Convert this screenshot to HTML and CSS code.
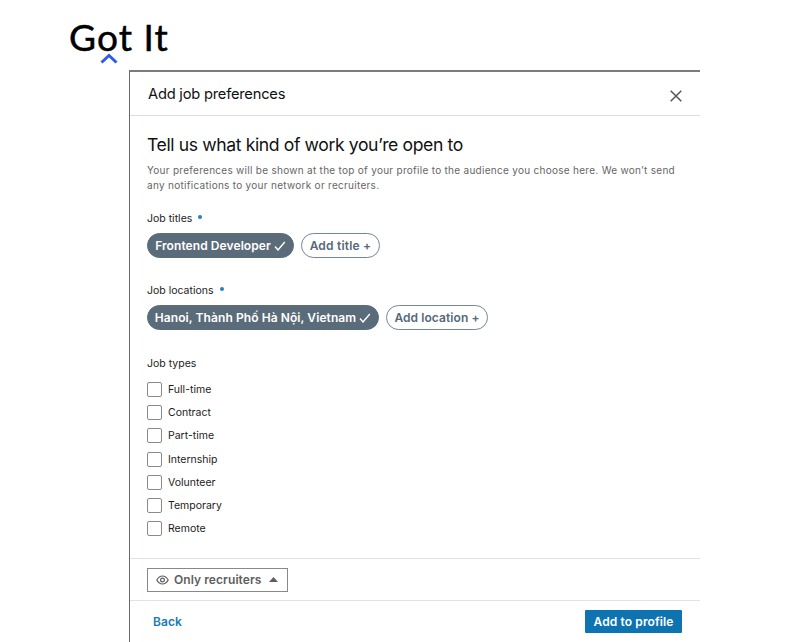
FILE: index.html
```html
<!DOCTYPE html>
<html lang="en">
<head>
    <meta charset="UTF-8">
    <meta name="viewport" content="width=device-width, initial-scale=1.0">
    <title>Add job preferences</title>
    <link rel="stylesheet" href="styles.css">
</head>
<body>
    <div class="logo">
        <span class="logo-text">Got It</span>
        <svg class="logo-mark" width="18" height="11" viewBox="0 0 18 11"><path d="M1.5 9.5 L9 2.5 L16.5 9.5" fill="none" stroke="#2f5bea" stroke-width="3"/></svg>
    </div>
    <div class="modal">
        <div class="modal-header">
            <h2>Add job preferences</h2>
            <svg class="close" width="12" height="12" viewBox="0 0 12 12"><path d="M0.7 0.7 L11.3 11.3 M11.3 0.7 L0.7 11.3" fill="none" stroke="#555" stroke-width="1.5"/></svg>
        </div>
        <div class="modal-body">
            <h1>Tell us what kind of work you’re open to</h1>
            <p class="intro">Your preferences will be shown at the top of your profile to the audience you choose here. We won’t send<br>any notifications to your network or recruiters.</p>

            <div class="label titles-label">Job titles <span class="required"></span></div>
            <div class="pills">
                <button class="pill selected pill-title"><span>Frontend Developer</span><svg width="12" height="10" viewBox="0 0 12 10"><path d="M1 5.5 L4 9 L10.8 1" fill="none" stroke="#fff" stroke-width="1.4"/></svg></button>
                <button class="pill add-title"><span>Add title +</span></button>
            </div>

            <div class="label locations-label">Job locations <span class="required"></span></div>
            <div class="pills">
                <button class="pill selected pill-location"><span>Hanoi, Thành Phố Hà Nội, Vietnam</span><svg width="12" height="10" viewBox="0 0 12 10"><path d="M1 5.5 L4 9 L10.8 1" fill="none" stroke="#fff" stroke-width="1.4"/></svg></button>
                <button class="pill add-location"><span>Add location +</span></button>
            </div>

            <div class="label types-label">Job types</div>
            <div class="types">
                <label><input type="checkbox"><span>Full-time</span></label>
                <label><input type="checkbox"><span>Contract</span></label>
                <label><input type="checkbox"><span>Part-time</span></label>
                <label><input type="checkbox"><span>Internship</span></label>
                <label><input type="checkbox"><span>Volunteer</span></label>
                <label><input type="checkbox"><span>Temporary</span></label>
                <label><input type="checkbox"><span>Remote</span></label>
            </div>
        </div>
        <div class="visibility">
            <button class="visibility-button">
                <svg width="13" height="10" viewBox="0 0 13 10" fill="none" stroke="#5e5e5e" stroke-width="1.2"><path d="M0.8 5 Q3 1 6.5 1 T12.2 5 Q10 9 6.5 9 T0.8 5 Z"/><circle cx="6.5" cy="5" r="1.9"/></svg>
                <span>Only recruiters</span>
                <svg class="caret" width="9" height="5" viewBox="0 0 9 5"><path d="M0 5 L4.5 0 L9 5 Z" fill="#5e5e5e"/></svg>
            </button>
        </div>
        <div class="modal-footer">
            <a href="#" class="back">Back</a>
            <button class="submit">Add to profile</button>
        </div>
    </div>
</body>
</html>
```
FILE: styles.css
```css
* {
    box-sizing: border-box;
}
body {
    margin: 0;
    height: 642px;
    overflow: hidden;
    background-color: #fff;
    font-family: Inter, sans-serif;
    color: #1c1c1c;
}
h1, h2, p {
    margin: 0;
    font-weight: 400;
    white-space: nowrap;
}
button {
    font-family: inherit;
    padding: 0;
    cursor: pointer;
}
svg {
    display: block;
    flex: none;
}
.logo {
    height: 70px;
    padding: 16px 0 0 69px;
}
.logo-text {
    display: block;
    height: 37px;
    font-family: Lato, sans-serif;
    font-size: 37px;
    line-height: 42px;
    letter-spacing: 1.1px;
    color: #000;
    -webkit-text-stroke: 0.5px #000;
}
.logo-mark {
    margin-left: 31px;
}
.modal {
    width: 571px;
    height: 580px;
    margin-left: 129px;
    border-top: 2px solid #7c7c7c;
    border-left: 1px solid #666b70;
}
.modal-header {
    display: flex;
    justify-content: space-between;
    height: 44px;
    padding: 12px 18px 0 18px;
    border-bottom: 1px solid #dedede;
}
.modal-header h2 {
    font-size: 14.7px;
    line-height: 20px;
    letter-spacing: -0.22px;
    color: #111;
}
.close {
    margin-top: 6px;
}
.modal-body {
    height: 442px;
    padding: 17px 0 0 17px;
}
h1 {
    font-size: 17.6px;
    line-height: 24px;
    letter-spacing: -0.39px;
    color: #111;
}
.intro {
    padding-top: 6px;
    font-size: 10px;
    line-height: 14.5px;
    letter-spacing: 0.285px;
    color: #666;
}
.label {
    display: flex;
    align-items: center;
    height: 14px;
    font-size: 10.5px;
}
.required {
    width: 4px;
    height: 4px;
    margin: -3px 0 0 6px;
    border-radius: 50%;
    background-color: #1f84c4;
}
.titles-label {
    margin-top: 19px;
}
.locations-label {
    margin-top: 25px;
}
.types-label {
    margin-top: 26px;
}
.pills {
    display: flex;
    gap: 7px;
    margin-top: 8px;
}
.pill {
    display: flex;
    align-items: center;
    justify-content: center;
    gap: 3px;
    height: 25px;
    border: 1px solid #75869a;
    border-radius: 13px;
    background-color: #fff;
    color: #56687a;
    font-size: 12px;
    font-weight: 600;
    letter-spacing: 0.08px;
    white-space: nowrap;
}
.selected {
    border-color: #5a6b7a;
    background-color: #5a6b7a;
    color: #fff;
}
.pill-title {
    width: 147px;
}
.add-title {
    width: 79px;
    letter-spacing: 0.2px;
}
.pill-location {
    width: 232px;
}
.add-location {
    width: 102px;
}
.types {
    padding-top: 8px;
}
.types label {
    display: flex;
    align-items: center;
    gap: 6px;
    height: 23.2px;
    font-size: 10.5px;
}
input[type="checkbox"] {
    appearance: none;
    width: 15px;
    height: 15px;
    margin: 0;
    border: 1px solid #8a8a8a;
    border-radius: 2px;
}
.visibility {
    display: flex;
    align-items: center;
    height: 43px;
    padding-left: 17px;
    border-top: 1px solid #e2e2e2;
    border-bottom: 1px solid #e2e2e2;
}
.visibility-button {
    display: flex;
    align-items: center;
    width: 141px;
    height: 24px;
    padding-left: 8px;
    gap: 5px;
    border: 1px solid #888;
    background-color: #fff;
    color: #5e5e5e;
    font-size: 12px;
    font-weight: 600;
    letter-spacing: 0.08px;
}
.caret {
    margin-left: 2px;
}
.modal-footer {
    display: flex;
    justify-content: space-between;
    padding: 9px 18px 0 23px;
}
.back {
    color: #1a78b4;
    font-size: 12px;
    font-weight: 600;
    line-height: 24px;
    letter-spacing: 0.1px;
    text-decoration: none;
}
.submit {
    width: 97px;
    height: 23px;
    border: none;
    border-radius: 1px;
    background-color: #0e73b1;
    color: #fff;
    font-size: 12px;
    font-weight: 600;
    letter-spacing: 0.1px;
}
```
